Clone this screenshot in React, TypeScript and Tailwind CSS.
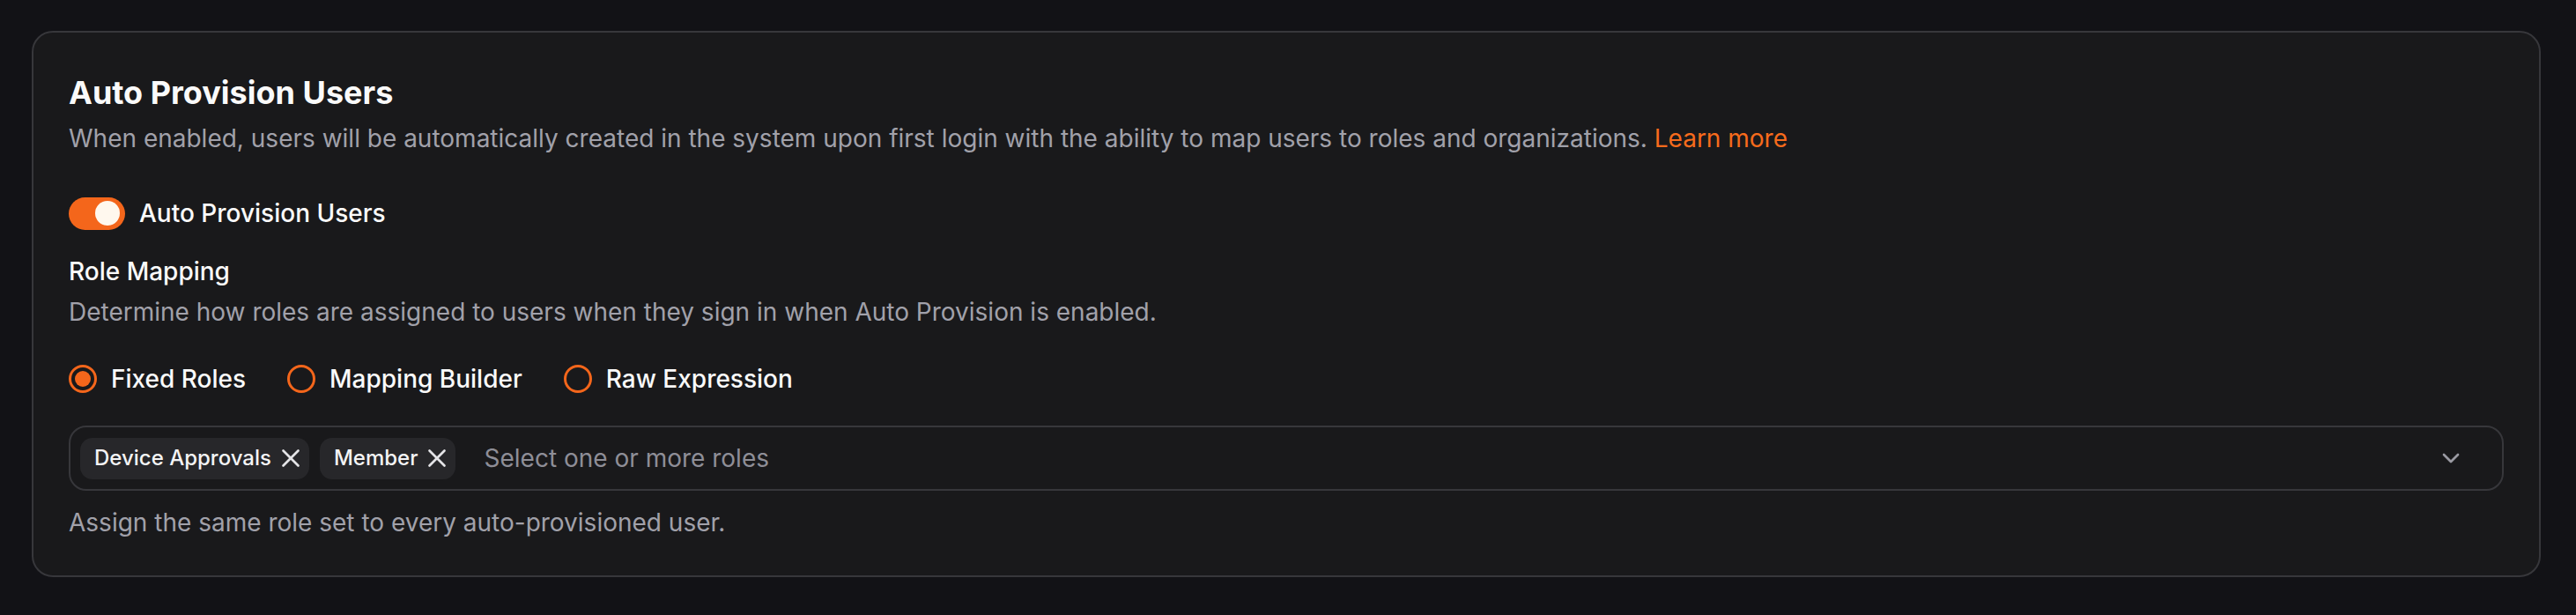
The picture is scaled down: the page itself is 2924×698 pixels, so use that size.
import { ChevronDown, X } from "lucide-react";

const roles = ["Device Approvals", "Member"];
const modes = ["Fixed Roles", "Mapping Builder", "Raw Expression"] as const;

function RoleChip({ label }: { label: string }) {
  return (
    <span className="flex h-[47px] items-center gap-[5px] rounded-[14px] bg-[#27272a] pl-[16px] pr-[4px] text-[24px] font-medium text-[#f4f4f5]">
      {label}
      <X size={34} strokeWidth={1.9} className="text-[#e4e4e7]" />
    </span>
  );
}

export default function App() {
  const selected: (typeof modes)[number] = "Fixed Roles";

  return (
    <div className="min-h-screen bg-[#121216] pl-[36px] pr-[40px] pt-[35px] font-['Inter',sans-serif]">
      <section className="flex flex-col rounded-[24px] border-2 border-[#37373b] bg-[#19191b] p-[40px]">
        <h1 className="text-[36px] font-bold leading-[56px] text-[#fafafa]">Auto Provision Users</h1>
        <p className="mt-[4px] text-[28px] leading-[40px] text-[#a1a1aa]">
          When enabled, users will be automatically created in the system upon first login with the ability to map
          users to roles and organizations. <a className="text-[#f76b1c]">Learn more</a>
        </p>

        <div className="mt-[45px] flex h-[40px] items-center gap-[16px]">
          <span className="flex h-[37px] w-[64px] items-center justify-end rounded-full bg-[#f4661b] pr-[6px]">
            <span className="h-[28px] w-[28px] rounded-full bg-[#fff8ee]" />
          </span>
          <span className="text-[28px] font-medium leading-[40px] text-[#fafafa]">Auto Provision Users</span>
        </div>

        <h2 className="mt-[26px] text-[28px] font-medium leading-[40px] text-[#fafafa]">Role Mapping</h2>
        <p className="mt-[6px] text-[28px] leading-[40px] text-[#a1a1aa]">
          Determine how roles are assigned to users when they sign in when Auto Provision is enabled.
        </p>

        <div className="mt-[36px] flex h-[40px] items-center gap-[47px]">
          {modes.map((mode) => (
            <label key={mode} className="flex items-center gap-[16px]">
              <span className="flex h-[32px] w-[32px] items-center justify-center rounded-full border-[3px] border-[#f4661b]">
                {mode === selected ? <span className="h-[18px] w-[18px] rounded-full bg-[#f4661b]" /> : null}
              </span>
              <span className="text-[28px] font-medium leading-[40px] text-[#fafafa]">{mode}</span>
            </label>
          ))}
        </div>

        <div className="mt-[33px] flex h-[74px] items-center rounded-[20px] border-2 border-[#37373b] pl-[11px] pr-[42px]">
          <div className="flex flex-1 items-center gap-[12px]">
            {roles.map((role) => (
              <RoleChip key={role} label={role} />
            ))}
            <span className="ml-[20px] text-[28px] text-[#8e8e97]">Select one or more roles</span>
          </div>
          <ChevronDown size={32} strokeWidth={2} className="text-[#9a9aa2]" />
        </div>

        <p className="mt-[16px] text-[28px] leading-[40px] text-[#a1a1aa]">
          Assign the same role set to every auto-provisioned user.
        </p>
      </section>
    </div>
  );
}
